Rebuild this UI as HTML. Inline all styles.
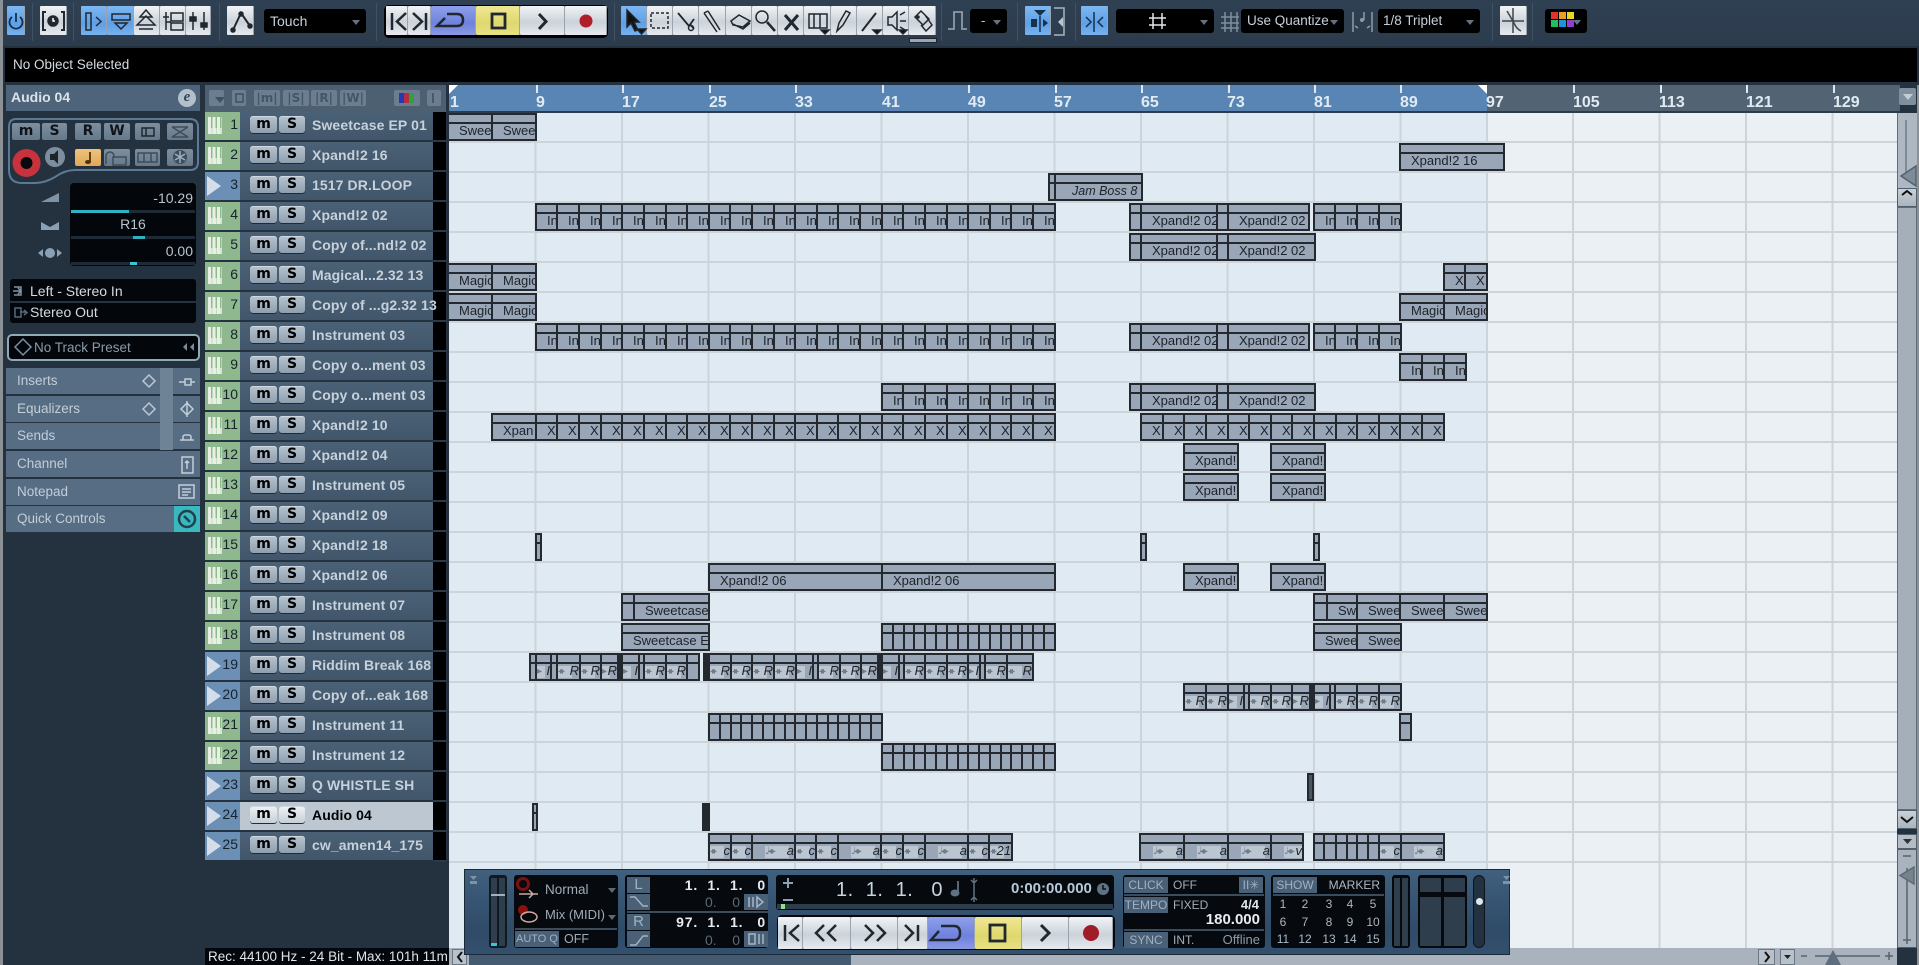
<!DOCTYPE html>
<html><head><meta charset="utf-8"><title>Cubase Project</title>
<style>
html,body{margin:0;padding:0;background:#24323f}
#p{position:relative;width:1919px;height:965px;overflow:hidden;background:#24323f;font:13px/16px "Liberation Sans",sans-serif;white-space:nowrap;color:#d0d8e0}
#p *{position:absolute}
.tb{top:6px;height:29px;background:linear-gradient(#f1f4f6,#cbd2d9 55%,#e6eaee);box-shadow:inset -1px 0 0 #9aa4ae;border-radius:1px}
.bl{background:linear-gradient(#7db8f2,#5f9fe6 60%,#78b2ee)}
.cb{top:9px;height:24px;background:#000;border-radius:3px;line-height:24px;color:#c6d0da;padding-left:6px;box-sizing:border-box}
.cb u{right:6px;top:11px;width:0;height:0;border:4px solid transparent;border-top:5px solid #64727f;border-bottom:0}
.sp{top:3px;width:1px;height:38px;background:#3f5264}
.l{left:205px;width:228px;height:28px;background:linear-gradient(#4b6176,#41566a);color:#c6d1db;font-weight:bold;font-size:14px;letter-spacing:.1px;line-height:27px}
.n{left:0;top:0;width:35px;height:28px;color:#17222c;font-weight:normal;text-align:right;letter-spacing:0;font-size:14px;line-height:24px;box-sizing:border-box;padding-right:2px}
.m{background:#8fb88f}.a{background:#6c8fb5}
.m::before{content:"";position:absolute;left:3px;top:5px;width:14px;height:17px;background:repeating-linear-gradient(90deg,#e8f0e4 0 3px,#8fb88f 3px 4.5px) 0 0/100% 11px no-repeat,repeating-linear-gradient(90deg,#e8f0e4 0 3.5px,#c6dcc4 3.5px 4.5px)}
.a::before{content:"";position:absolute;left:2px;top:4px;width:14px;height:20px;background:#d3deea;clip-path:polygon(0 0,100% 50%,0 100%)}
.B{top:4px;height:17px;background:linear-gradient(#b7c3cf,#8f9fae);border-radius:3px;box-shadow:0 1px 0 #1f2b36,inset 0 1px 0 #cfd8e0;color:#000;font:bold 14px/16px "DejaVu Sans",sans-serif;text-align:center;letter-spacing:0}
.B1{left:45px;width:27px}.B2{left:74px;width:26px}
.N{left:107px;top:0}
.sel{background:#bcc7d2;color:#000}
.sel .B{background:linear-gradient(#f0f3f5,#c6cfd7)}
.t{left:-1px;width:1900px;height:30px}
.t b{top:1px;height:24px;z-index:0;border:2px solid #23292f;background:linear-gradient(#98a6b8 7px,#23292f 7px 9px,#98a6b8 9px);font-weight:normal;color:#1d2228;line-height:32px;overflow:hidden;text-indent:10px}
.t b.D{background:#23292f}
.t b.f{border-left:0}
.A,.Q,.P{text-align:right;font-style:italic;text-indent:0!important;font-size:13px}
.A::before,.Q::before,.P::before{position:absolute;z-index:-1;left:0;top:11px;height:12px;background:#bcc6d1;color:#6f7c89;font:normal 10px/12px "DejaVu Sans",sans-serif;letter-spacing:-3px;text-align:left}
.A::before{content:"◂▸";width:14px}
.P::before{content:"▸";width:8px}
.Q::before{content:"♩◂▸";left:12px;width:24px;letter-spacing:-2px}
.rk{top:85px;width:2px;height:8px;background:#dfe8f0}
.rl{top:95px;font:bold 16px/16px "Liberation Sans",sans-serif;color:#e2ebf2}
.ib{left:6px;width:194px;height:26px;background:#566d84;color:#c3ced8;line-height:25px;text-indent:11px;font-size:13.5px}
.mb{top:123px;height:17px;background:linear-gradient(#7d8f9f,#66798a);border-radius:2px;color:#0e141a;font:bold 14px/16px "DejaVu Sans",sans-serif;text-align:center}
.lh{top:90px;height:16px;background:#6b7d8e;border-radius:2px;color:#42566a;font:bold 12px/16px "DejaVu Sans",sans-serif;text-align:center}
.bk{background:#06090d;border-radius:3px}
.tl{background:#4a6076;color:#9fb2c2;text-align:center;font-size:12px;line-height:16px}
.v{color:#e4ecf2;font-weight:bold;font-size:14px;letter-spacing:.8px;white-space:pre}
.dm{color:#5a6a78;font-size:14px;white-space:pre}
.mk{color:#aab8c4;font-size:12px;width:18px;text-align:center}
</style></head><body><div id="p">

<!-- edges -->
<div style="left:0;top:0;width:3px;height:965px;background:#8c9196"></div>
<div style="left:3px;top:0;width:1916px;height:46px;background:linear-gradient(#2f4052,#2c3c4d)"></div>
<div style="left:5px;top:48px;width:1912px;height:34px;background:#000"></div>
<div style="left:13px;top:57px;color:#d4dce3;font-size:13.5px">No Object Selected</div>

<!-- toolbar -->
<div class="sp" style="left:32px"></div><div class="sp" style="left:73px"></div><div class="sp" style="left:219px"></div><div class="sp" style="left:376px"></div><div class="sp" style="left:614px"></div><div class="sp" style="left:941px"></div><div class="sp" style="left:1017px"></div><div class="sp" style="left:1075px"></div><div class="sp" style="left:1492px"></div><div class="sp" style="left:1532px"></div>
<div class="tb bl" style="left:7px;width:18px"></div>
<div class="tb" style="left:40px;width:27px"></div>
<div class="tb bl" style="left:81px;width:26px"></div>
<div class="tb bl" style="left:107px;width:27px"></div>
<div class="tb" style="left:134px;width:26px"></div>
<div class="tb" style="left:160px;width:26px"></div>
<div class="tb" style="left:186px;width:25px"></div>
<div class="tb" style="left:227px;width:27px"></div>
<div class="cb" style="left:264px;width:102px;font-size:14px">Touch<u></u></div>
<div style="left:384px;top:5px;width:224px;height:33px;background:#000;border-radius:5px"></div>
<div class="tb" style="left:386px;width:22px"></div>
<div class="tb" style="left:408px;width:23px"></div>
<div class="tb" style="left:431px;width:45px;background:linear-gradient(#8e9fea,#6f82dc 60%,#8a9ae4)"></div>
<div class="tb" style="left:476px;width:44px;background:linear-gradient(#efe894,#dfd76e 60%,#e8e184)"></div>
<div class="tb" style="left:520px;width:45px"></div>
<div class="tb" style="left:565px;width:42px"></div>
<div class="tb bl" style="left:621px;width:26px"></div>
<div class="tb" style="left:647px;width:26px"></div><div class="tb" style="left:673px;width:26px"></div><div class="tb" style="left:699px;width:27px"></div><div class="tb" style="left:726px;width:26px"></div><div class="tb" style="left:752px;width:26px"></div><div class="tb" style="left:778px;width:26px"></div><div class="tb" style="left:804px;width:27px"></div><div class="tb" style="left:831px;width:26px"></div><div class="tb" style="left:857px;width:26px"></div><div class="tb" style="left:883px;width:26px"></div><div class="tb" style="left:909px;width:27px"></div>
<div style="left:909px;top:38px;width:28px;height:5px;background:#9aa6b4;border:1px solid #1b2631;box-sizing:border-box"></div>
<div class="cb" style="left:970px;width:37px;text-align:left;padding-left:11px">-<u></u></div>
<div class="tb bl" style="left:1025px;width:26px"></div>
<div class="tb bl" style="left:1081px;width:27px"></div>
<div class="cb" style="left:1116px;width:98px"><u></u></div>
<div class="cb" style="left:1241px;width:103px;font-size:13.5px">Use Quantize<u></u></div>
<div class="cb" style="left:1378px;width:102px;padding-left:5px;font-size:13.5px">1/8 Triplet<u></u></div>
<div class="tb" style="left:1500px;width:27px"></div>
<div class="cb" style="left:1545px;width:42px"><u></u></div>
<div style="left:1551px;top:12px;width:7px;height:7px;background:#e03030"></div><div style="left:1559px;top:12px;width:7px;height:7px;background:#e8a020"></div><div style="left:1567px;top:12px;width:7px;height:7px;background:#e8d820"></div>
<div style="left:1551px;top:20px;width:7px;height:7px;background:#20c060"></div><div style="left:1559px;top:20px;width:7px;height:7px;background:#2090e0"></div><div style="left:1567px;top:20px;width:7px;height:7px;background:#9040d0"></div>

<!-- inspector -->
<div style="left:6px;top:85px;width:194px;height:26px;background:#4e647a;color:#dbe3ea;font-weight:bold;font-size:14px;line-height:25px;text-indent:5px">Audio 04</div>
<div style="left:178px;top:89px;width:18px;height:18px;border-radius:50%;background:#b3c0cc;color:#33485a;font:italic bold 15px/17px 'Liberation Serif',serif;text-align:center">e</div>
<div class="mb" style="left:12px;width:28px">m</div><div class="mb" style="left:42px;width:25px">S</div><div class="mb" style="left:75px;width:26px">R</div><div class="mb" style="left:104px;width:26px">W</div><div class="mb" style="left:135px;width:25px"></div><div class="mb" style="left:167px;width:26px"></div>
<div class="mb" style="left:75px;top:149px;width:26px;background:linear-gradient(#eec27e,#e0a858)"></div><div class="mb" style="left:104px;top:149px;width:26px"></div><div class="mb" style="left:135px;top:149px;width:25px"></div><div class="mb" style="left:167px;top:149px;width:26px"></div>
<div style="left:70px;top:183px;width:126px;height:83px;background:#03060a;border-radius:4px"></div>
<div style="right:1726px;top:190px;color:#b8c4ce;font-size:14px">-10.29</div>
<div style="left:71px;top:210px;width:124px;height:3px;background:#1e2a36"></div><div style="left:71px;top:210px;width:58px;height:3px;background:#2fb3c4"></div>
<div style="left:70px;width:126px;top:216px;text-align:center;color:#b8c4ce;font-size:14px">R16</div>
<div style="left:71px;top:236px;width:124px;height:3px;background:#1e2a36"></div><div style="left:133px;top:236px;width:12px;height:3px;background:#2fb3c4"></div>
<div style="right:1726px;top:243px;color:#b8c4ce;font-size:14px">0.00</div>
<div style="left:71px;top:262px;width:124px;height:3px;background:#1e2a36"></div><div style="left:130px;top:262px;width:7px;height:3px;background:#3fc3d4"></div>
<div style="left:10px;top:279px;width:186px;height:44px;background:#03060a;border-radius:3px"></div>
<div style="left:10px;top:301px;width:186px;height:2px;background:#25333f"></div>
<div style="left:30px;top:283px;font-size:14px;color:#d4dce3">Left - Stereo In</div>
<div style="left:30px;top:304px;font-size:14px;color:#d4dce3">Stereo Out</div>
<div style="left:7px;top:334px;width:193px;height:27px;box-sizing:border-box;background:#03060a;border:2px solid #8fa9b5;border-radius:5px"></div>
<div style="left:34px;top:340px;color:#8a9aa8;font-size:13.5px">No Track Preset</div>
<div class="ib" style="top:368px">Inserts</div><div class="ib" style="top:396px">Equalizers</div><div class="ib" style="top:423px">Sends</div><div class="ib" style="top:451px">Channel</div><div class="ib" style="top:479px">Notepad</div><div class="ib" style="top:506px">Quick Controls</div>
<div style="left:160px;top:368px;width:13px;height:82px;background:#6f8396"></div>
<div style="left:174px;top:506px;width:26px;height:26px;background:#3ab8c0"></div>

<!-- track list -->
<div style="left:205px;top:85px;width:241px;height:27px;background:#4d6072"></div>
<div class="lh" style="left:209px;width:15px"></div><div class="lh" style="left:232px;width:14px"></div>
<div class="lh" style="left:254px;width:26px">|m|</div><div class="lh" style="left:283px;width:26px">|S|</div><div class="lh" style="left:311px;width:26px">|R|</div><div class="lh" style="left:340px;width:26px">|W|</div><div class="lh" style="left:394px;width:26px"></div><div class="lh" style="left:427px;width:14px"></div>
<div style="left:399px;top:93px;width:5px;height:10px;background:#2838b0"></div><div style="left:404px;top:93px;width:5px;height:10px;background:#b03040"></div><div style="left:409px;top:93px;width:5px;height:10px;background:#30a040"></div>
<div style="left:433px;top:112px;width:13px;height:750px;background:repeating-linear-gradient(#000 0 28px,#2a3a49 28px 30px)"></div>

<div class="l" style="top:112px"><div class="n m">1</div><div class="B B1">m</div><div class="B B2">S</div><div class="N">Sweetcase EP 01</div></div>
<div class="l" style="top:142px"><div class="n m">2</div><div class="B B1">m</div><div class="B B2">S</div><div class="N">Xpand!2 16</div></div>
<div class="l" style="top:172px"><div class="n a">3</div><div class="B B1">m</div><div class="B B2">S</div><div class="N">1517 DR.LOOP</div></div>
<div class="l" style="top:202px"><div class="n m">4</div><div class="B B1">m</div><div class="B B2">S</div><div class="N">Xpand!2 02</div></div>
<div class="l" style="top:232px"><div class="n m">5</div><div class="B B1">m</div><div class="B B2">S</div><div class="N">Copy of...nd!2 02</div></div>
<div class="l" style="top:262px"><div class="n m">6</div><div class="B B1">m</div><div class="B B2">S</div><div class="N">Magical...2.32 13</div></div>
<div class="l" style="top:292px"><div class="n m">7</div><div class="B B1">m</div><div class="B B2">S</div><div class="N">Copy of ...g2.32 13</div></div>
<div class="l" style="top:322px"><div class="n m">8</div><div class="B B1">m</div><div class="B B2">S</div><div class="N">Instrument 03</div></div>
<div class="l" style="top:352px"><div class="n m">9</div><div class="B B1">m</div><div class="B B2">S</div><div class="N">Copy o...ment 03</div></div>
<div class="l" style="top:382px"><div class="n m">10</div><div class="B B1">m</div><div class="B B2">S</div><div class="N">Copy o...ment 03</div></div>
<div class="l" style="top:412px"><div class="n m">11</div><div class="B B1">m</div><div class="B B2">S</div><div class="N">Xpand!2 10</div></div>
<div class="l" style="top:442px"><div class="n m">12</div><div class="B B1">m</div><div class="B B2">S</div><div class="N">Xpand!2 04</div></div>
<div class="l" style="top:472px"><div class="n m">13</div><div class="B B1">m</div><div class="B B2">S</div><div class="N">Instrument 05</div></div>
<div class="l" style="top:502px"><div class="n m">14</div><div class="B B1">m</div><div class="B B2">S</div><div class="N">Xpand!2 09</div></div>
<div class="l" style="top:532px"><div class="n m">15</div><div class="B B1">m</div><div class="B B2">S</div><div class="N">Xpand!2 18</div></div>
<div class="l" style="top:562px"><div class="n m">16</div><div class="B B1">m</div><div class="B B2">S</div><div class="N">Xpand!2 06</div></div>
<div class="l" style="top:592px"><div class="n m">17</div><div class="B B1">m</div><div class="B B2">S</div><div class="N">Instrument 07</div></div>
<div class="l" style="top:622px"><div class="n m">18</div><div class="B B1">m</div><div class="B B2">S</div><div class="N">Instrument 08</div></div>
<div class="l" style="top:652px"><div class="n a">19</div><div class="B B1">m</div><div class="B B2">S</div><div class="N">Riddim Break 168</div></div>
<div class="l" style="top:682px"><div class="n a">20</div><div class="B B1">m</div><div class="B B2">S</div><div class="N">Copy of...eak 168</div></div>
<div class="l" style="top:712px"><div class="n m">21</div><div class="B B1">m</div><div class="B B2">S</div><div class="N">Instrument 11</div></div>
<div class="l" style="top:742px"><div class="n m">22</div><div class="B B1">m</div><div class="B B2">S</div><div class="N">Instrument 12</div></div>
<div class="l" style="top:772px"><div class="n a">23</div><div class="B B1">m</div><div class="B B2">S</div><div class="N">Q WHISTLE SH</div></div>
<div class="l sel" style="top:802px"><div class="n a">24</div><div class="B B1">m</div><div class="B B2">S</div><div class="N">Audio 04</div></div>
<div class="l" style="top:832px"><div class="n a">25</div><div class="B B1">m</div><div class="B B2">S</div><div class="N">cw_amen14_175</div></div>

<!-- status -->
<div style="left:205px;top:948px;width:244px;height:17px;background:#03060a;color:#dfe5ea;font-size:13.5px;line-height:18px;text-indent:3px;overflow:hidden">Rec: 44100 Hz - 24 Bit - Max: 101h 11m</div>

<!-- ruler -->
<div style="left:449px;top:85px;width:1038px;height:27px;background:#5985b5"></div>
<div style="left:1487px;top:85px;width:413px;height:27px;background:#526474"></div>
<div style="left:449px;top:111px;width:1451px;height:2px;background:#2c3c4c"></div>
<div class="rk" style="left:536px"></div><div class="rk" style="left:622px"></div><div class="rk" style="left:709px"></div><div class="rk" style="left:795px"></div><div class="rk" style="left:882px"></div><div class="rk" style="left:968px"></div><div class="rk" style="left:1055px"></div><div class="rk" style="left:1141px"></div><div class="rk" style="left:1228px"></div><div class="rk" style="left:1314px"></div><div class="rk" style="left:1400px"></div><div class="rk" style="left:1573px"></div><div class="rk" style="left:1660px"></div><div class="rk" style="left:1746px"></div><div class="rk" style="left:1833px"></div>
<div class="rl" style="left:450px">1</div><div class="rl" style="left:536px">9</div><div class="rl" style="left:622px">17</div><div class="rl" style="left:709px">25</div><div class="rl" style="left:795px">33</div><div class="rl" style="left:882px">41</div><div class="rl" style="left:968px">49</div><div class="rl" style="left:1054px">57</div><div class="rl" style="left:1141px">65</div><div class="rl" style="left:1227px">73</div><div class="rl" style="left:1314px">81</div><div class="rl" style="left:1400px">89</div><div class="rl" style="left:1486px">97</div><div class="rl" style="left:1573px">105</div><div class="rl" style="left:1659px">113</div><div class="rl" style="left:1746px">121</div><div class="rl" style="left:1833px">129</div>
<div style="left:1899px;top:88px;width:17px;height:17px;background:#7f8f9e;border-radius:2px"></div>

<!-- grid -->
<div style="left:449px;top:113px;width:1038px;height:835px;background:#dfeaf3"></div>
<div style="left:1487px;top:113px;width:410px;height:835px;background:#ebf0f4"></div>
<div style="left:450.3px;top:113px;width:1447px;height:835px;background:repeating-linear-gradient(90deg,transparent 0 84.48px,#cdd3da 84.48px 86.48px)"></div>
<div style="left:449px;top:113px;width:1448px;height:750px;background:repeating-linear-gradient(transparent 0 28px,#cdd3da 28px 30px)"></div>

<div class="t" style="top:112px"><b class="f" style="left:450px;width:42px">Sweetcase</b><b style="left:492px;width:42px">Sweetcase</b></div>
<div class="t" style="top:142px"><b style="left:1400px;width:102px">Xpand!2 16</b></div>
<div class="t" style="top:172px"><b style="left:1049px;width:4px"></b><b style="left:1055px;width:85px;font-style:italic;text-indent:16px;font-size:12.5px">Jam Boss 8</b></div>
<div class="t" style="top:202px"><b style="left:536px;width:19px">In</b><b style="left:557px;width:20px">In</b><b style="left:579px;width:20px">In</b><b style="left:601px;width:19px">In</b><b style="left:622px;width:20px">In</b><b style="left:644px;width:20px">In</b><b style="left:666px;width:19px">In</b><b style="left:687px;width:20px">In</b><b style="left:709px;width:19px">In</b><b style="left:730px;width:20px">In</b><b style="left:752px;width:20px">In</b><b style="left:774px;width:19px">In</b><b style="left:795px;width:20px">In</b><b style="left:817px;width:19px">In</b><b style="left:838px;width:20px">In</b><b style="left:860px;width:20px">In</b><b style="left:882px;width:19px">In</b><b style="left:903px;width:20px">In</b><b style="left:925px;width:20px">In</b><b style="left:947px;width:19px">In</b><b style="left:968px;width:20px">In</b><b style="left:990px;width:19px">In</b><b style="left:1011px;width:20px">In</b><b style="left:1033px;width:20px">In</b><b style="left:1130px;width:9px"></b><b style="left:1141px;width:74px">Xpand!2 02</b><b style="left:1217px;width:9px"></b><b style="left:1228px;width:79px">Xpand!2 02</b><b style="left:1314px;width:19px">In</b><b style="left:1335px;width:20px">In</b><b style="left:1357px;width:20px">In</b><b style="left:1379px;width:20px">In</b></div>
<div class="t" style="top:232px"><b style="left:1130px;width:9px"></b><b style="left:1141px;width:74px">Xpand!2 02</b><b style="left:1217px;width:9px"></b><b style="left:1228px;width:85px">Xpand!2 02</b></div>
<div class="t" style="top:262px"><b class="f" style="left:450px;width:42px">Magic</b><b style="left:492px;width:42px">Magic</b><b style="left:1444px;width:19px">X</b><b style="left:1465px;width:20px">X</b></div>
<div class="t" style="top:292px"><b class="f" style="left:450px;width:42px">Magic</b><b style="left:492px;width:42px">Magic</b><b style="left:1400px;width:42px">Magic</b><b style="left:1444px;width:41px">Magic</b></div>
<div class="t" style="top:322px"><b style="left:536px;width:19px">In</b><b style="left:557px;width:20px">In</b><b style="left:579px;width:20px">In</b><b style="left:601px;width:19px">In</b><b style="left:622px;width:20px">In</b><b style="left:644px;width:20px">In</b><b style="left:666px;width:19px">In</b><b style="left:687px;width:20px">In</b><b style="left:709px;width:19px">In</b><b style="left:730px;width:20px">In</b><b style="left:752px;width:20px">In</b><b style="left:774px;width:19px">In</b><b style="left:795px;width:20px">In</b><b style="left:817px;width:19px">In</b><b style="left:838px;width:20px">In</b><b style="left:860px;width:20px">In</b><b style="left:882px;width:19px">In</b><b style="left:903px;width:20px">In</b><b style="left:925px;width:20px">In</b><b style="left:947px;width:19px">In</b><b style="left:968px;width:20px">In</b><b style="left:990px;width:19px">In</b><b style="left:1011px;width:20px">In</b><b style="left:1033px;width:20px">In</b><b style="left:1130px;width:9px"></b><b style="left:1141px;width:74px">Xpand!2 02</b><b style="left:1217px;width:9px"></b><b style="left:1228px;width:79px">Xpand!2 02</b><b style="left:1314px;width:19px">In</b><b style="left:1335px;width:20px">In</b><b style="left:1357px;width:20px">In</b><b style="left:1379px;width:20px">In</b></div>
<div class="t" style="top:352px"><b style="left:1400px;width:20px">In</b><b style="left:1422px;width:20px">In</b><b style="left:1444px;width:20px">In</b></div>
<div class="t" style="top:382px"><b style="left:882px;width:19px">In</b><b style="left:903px;width:20px">In</b><b style="left:925px;width:20px">In</b><b style="left:947px;width:19px">In</b><b style="left:968px;width:20px">In</b><b style="left:990px;width:19px">In</b><b style="left:1011px;width:20px">In</b><b style="left:1033px;width:20px">In</b><b style="left:1130px;width:9px"></b><b style="left:1141px;width:74px">Xpand!2 02</b><b style="left:1217px;width:9px"></b><b style="left:1228px;width:85px">Xpand!2 02</b></div>
<div class="t" style="top:412px"><b style="left:492px;width:42px">Xpan</b><b style="left:536px;width:19px">X</b><b style="left:557px;width:20px">X</b><b style="left:579px;width:20px">X</b><b style="left:601px;width:19px">X</b><b style="left:622px;width:20px">X</b><b style="left:644px;width:20px">X</b><b style="left:666px;width:19px">X</b><b style="left:687px;width:20px">X</b><b style="left:709px;width:19px">X</b><b style="left:730px;width:20px">X</b><b style="left:752px;width:20px">X</b><b style="left:774px;width:19px">X</b><b style="left:795px;width:20px">X</b><b style="left:817px;width:19px">X</b><b style="left:838px;width:20px">X</b><b style="left:860px;width:20px">X</b><b style="left:882px;width:19px">X</b><b style="left:903px;width:20px">X</b><b style="left:925px;width:20px">X</b><b style="left:947px;width:19px">X</b><b style="left:968px;width:20px">X</b><b style="left:990px;width:19px">X</b><b style="left:1011px;width:20px">X</b><b style="left:1033px;width:20px">X</b><b style="left:1141px;width:20px">X</b><b style="left:1163px;width:19px">X</b><b style="left:1184px;width:20px">X</b><b style="left:1206px;width:20px">X</b><b style="left:1228px;width:19px">X</b><b style="left:1249px;width:20px">X</b><b style="left:1271px;width:19px">X</b><b style="left:1292px;width:20px">X</b><b style="left:1314px;width:20px">X</b><b style="left:1336px;width:19px">X</b><b style="left:1357px;width:20px">X</b><b style="left:1379px;width:19px">X</b><b style="left:1400px;width:20px">X</b><b style="left:1422px;width:20px">X</b></div>
<div class="t" style="top:442px"><b style="left:1184px;width:52px">Xpand!2</b><b style="left:1271px;width:52px">Xpand!2</b></div>
<div class="t" style="top:472px"><b style="left:1184px;width:52px">Xpand!2</b><b style="left:1271px;width:52px">Xpand!2</b></div>
<div class="t" style="top:532px"><b style="left:536px;width:3px"></b><b style="left:1141px;width:3px"></b><b style="left:1314px;width:3px"></b></div>
<div class="t" style="top:562px"><b style="left:709px;width:171px">Xpand!2 06</b><b style="left:882px;width:171px">Xpand!2 06</b><b style="left:1184px;width:52px">Xpand!2</b><b style="left:1271px;width:52px">Xpand!2</b></div>
<div class="t" style="top:592px"><b style="left:622px;width:10px"></b><b style="left:634px;width:73px">Sweetcase EP</b><b style="left:1314px;width:11px"></b><b style="left:1327px;width:28px">Sweetcase</b><b style="left:1357px;width:41px">Sweetcase</b><b style="left:1400px;width:42px">Sweetcase</b><b style="left:1444px;width:41px">Sweetcase</b></div>
<div class="t" style="top:622px"><b style="left:622px;width:85px">Sweetcase EP</b><b style="left:882px;width:9px"></b><b style="left:893px;width:9px"></b><b style="left:904px;width:8px"></b><b style="left:914px;width:9px"></b><b style="left:925px;width:9px"></b><b style="left:936px;width:9px"></b><b style="left:947px;width:9px"></b><b style="left:958px;width:8px"></b><b style="left:968px;width:9px"></b><b style="left:979px;width:9px"></b><b style="left:990px;width:9px"></b><b style="left:1001px;width:8px"></b><b style="left:1011px;width:9px"></b><b style="left:1022px;width:9px"></b><b style="left:1033px;width:9px"></b><b style="left:1044px;width:9px"></b><b style="left:1314px;width:41px">Sweetcase</b><b style="left:1357px;width:42px">Sweetcase</b></div>
<div class="t" style="top:652px"><b style="left:530px;width:4px"></b><b class="P" style="left:536px;width:13px">I</b><b style="left:551px;width:4px"></b><b class="A" style="left:557px;width:21px">R</b><b class="A" style="left:580px;width:19px">R</b><b class="P" style="left:601px;width:15px">R</b><b class="D" style="left:618px;width:2px"></b><b class="P" style="left:622px;width:15px">I</b><b style="left:639px;width:3px"></b><b class="A" style="left:644px;width:20px">R</b><b class="A" style="left:666px;width:19px">R</b><b style="left:687px;width:10px"></b><b class="D" style="left:704px;width:3px"></b><b class="A" style="left:709px;width:20px">R</b><b class="A" style="left:731px;width:19px">R</b><b class="A" style="left:752px;width:20px">R</b><b class="A" style="left:774px;width:20px">R</b><b class="P" style="left:796px;width:15px">I</b><b style="left:813px;width:3px"></b><b class="A" style="left:818px;width:20px">R</b><b class="A" style="left:840px;width:19px">R</b><b class="P" style="left:861px;width:15px">R</b><b class="D" style="left:878px;width:2px"></b><b class="P" style="left:882px;width:15px">I</b><b style="left:899px;width:3px"></b><b class="A" style="left:904px;width:19px">R</b><b class="A" style="left:925px;width:20px">R</b><b class="A" style="left:947px;width:19px">R</b><b class="P" style="left:968px;width:10px">I</b><b style="left:980px;width:3px"></b><b class="A" style="left:985px;width:20px">R</b><b class="A" style="left:1007px;width:24px">R</b></div>
<div class="t" style="top:682px"><b class="A" style="left:1184px;width:20px">R</b><b class="A" style="left:1206px;width:20px">R</b><b class="P" style="left:1228px;width:14px">I</b><b style="left:1244px;width:3px"></b><b class="A" style="left:1249px;width:20px">R</b><b class="A" style="left:1271px;width:19px">R</b><b class="P" style="left:1292px;width:16px">R</b><b class="D" style="left:1310px;width:2px"></b><b class="P" style="left:1314px;width:14px">I</b><b style="left:1330px;width:3px"></b><b class="A" style="left:1335px;width:20px">R</b><b class="A" style="left:1357px;width:20px">R</b><b class="A" style="left:1379px;width:20px">R</b></div>
<div class="t" style="top:712px"><b style="left:709px;width:9px"></b><b style="left:720px;width:9px"></b><b style="left:731px;width:8px"></b><b style="left:741px;width:9px"></b><b style="left:752px;width:9px"></b><b style="left:763px;width:9px"></b><b style="left:774px;width:9px"></b><b style="left:785px;width:8px"></b><b style="left:795px;width:9px"></b><b style="left:806px;width:9px"></b><b style="left:817px;width:9px"></b><b style="left:828px;width:8px"></b><b style="left:838px;width:9px"></b><b style="left:849px;width:9px"></b><b style="left:860px;width:9px"></b><b style="left:871px;width:9px"></b><b style="left:1400px;width:9px"></b></div>
<div class="t" style="top:742px"><b style="left:882px;width:9px"></b><b style="left:893px;width:9px"></b><b style="left:904px;width:8px"></b><b style="left:914px;width:9px"></b><b style="left:925px;width:9px"></b><b style="left:936px;width:9px"></b><b style="left:947px;width:9px"></b><b style="left:958px;width:8px"></b><b style="left:968px;width:9px"></b><b style="left:979px;width:9px"></b><b style="left:990px;width:9px"></b><b style="left:1001px;width:8px"></b><b style="left:1011px;width:9px"></b><b style="left:1022px;width:9px"></b><b style="left:1033px;width:9px"></b><b style="left:1044px;width:9px"></b></div>
<div class="t" style="top:772px"><b style="left:1308px;width:3px;background:#4a5560"></b></div>
<div class="t" style="top:802px"><b style="left:533px;width:2px"></b><b class="D" style="left:703px;width:4px"></b></div>
<div class="t" style="top:832px"><b class="A" style="left:709px;width:20px">c</b><b class="A" style="left:731px;width:19px">c</b><b class="Q" style="left:752px;width:41px">a</b><b class="A" style="left:795px;width:19px">c</b><b class="A" style="left:816px;width:20px">c</b><b class="Q" style="left:838px;width:41px">a</b><b class="A" style="left:881px;width:20px">c</b><b class="A" style="left:903px;width:20px">c</b><b class="Q" style="left:925px;width:41px">a</b><b class="A" style="left:968px;width:19px">c</b><b class="A" style="left:989px;width:21px">21</b><b class="Q" style="left:1140px;width:42px">a</b><b class="Q" style="left:1184px;width:42px">a</b><b class="Q" style="left:1228px;width:41px">a</b><b class="Q" style="left:1271px;width:30px">v</b><b style="left:1314px;width:8px"></b><b style="left:1324px;width:10px"></b><b style="left:1336px;width:9px"></b><b style="left:1347px;width:8px"></b><b style="left:1357px;width:9px"></b><b style="left:1368px;width:9px"></b><b class="A" style="left:1379px;width:20px">c</b><b class="Q" style="left:1401px;width:41px">a</b></div>

<!-- right scroll -->
<div style="left:1897px;top:113px;width:20px;height:75px;background:#aeb8c2;border-left:1px solid #5d6d7c;box-sizing:border-box"></div>
<div style="left:1897px;top:188px;width:20px;height:19px;background:linear-gradient(#c8d0d8,#aab4be);border:1px solid #4f5f6e;box-sizing:border-box"></div>
<div style="left:1897px;top:207px;width:20px;height:603px;background:#a5afba;border:1px solid #5d6d7c;box-sizing:border-box"></div>
<div style="left:1897px;top:810px;width:20px;height:19px;background:linear-gradient(#c8d0d8,#aab4be);border:1px solid #4f5f6e;box-sizing:border-box"></div>
<div style="left:1897px;top:834px;width:20px;height:15px;background:#b4bdc6;border:1px solid #4f5f6e;box-sizing:border-box"></div>
<div style="left:1897px;top:849px;width:20px;height:99px;background:#a9b3bd;border:1px solid #4f5f6e;box-sizing:border-box"></div>
<div style="left:1897px;top:948px;width:20px;height:17px;background:#24323f"></div>
<div style="left:1917px;top:85px;width:2px;height:880px;background:#8c9196"></div>

<!-- bottom scroll -->
<div style="left:449px;top:948px;width:1448px;height:17px;background:#aab2bd"></div>
<div style="left:452px;top:949px;width:15px;height:16px;background:#b8c0ca;border:1px solid #6a7886;box-sizing:border-box"></div>
<div style="left:469px;top:949px;width:382px;height:16px;background:#445a70"></div>
<div style="left:1758px;top:949px;width:17px;height:16px;background:#b8c0ca;border:1px solid #6a7886;box-sizing:border-box"></div>
<div style="left:1780px;top:949px;width:15px;height:16px;background:#b8c0ca;border:1px solid #6a7886;box-sizing:border-box"></div>

<!-- transport -->
<div style="left:464px;top:869px;width:1046px;height:86px;background:linear-gradient(#40607e,#2f4b68 70%,#33506e);border:1px solid #1b2935;box-sizing:border-box"></div>
<div class="bk" style="left:489px;top:875px;width:18px;height:73px;background:#101820"></div>
<div style="left:491px;top:878px;width:6px;height:68px;background:#2f3e4c"></div><div style="left:499px;top:878px;width:6px;height:68px;background:#2f3e4c"></div>
<div style="left:491px;top:894px;width:14px;height:2px;background:#9fb0be"></div>
<div style="left:491px;top:943px;width:6px;height:3px;background:#30c8e0"></div>
<div class="bk" style="left:514px;top:875px;width:104px;height:73px"></div>
<div style="left:545px;top:882px;color:#9fadb9;font-size:13.5px">Normal</div>
<div style="left:545px;top:907px;color:#9fadb9;font-size:13px">Mix (MIDI)</div>
<div style="left:515px;top:928px;width:102px;height:2px;background:#3b4c5c"></div>
<div class="tl" style="left:515px;top:931px;width:44px;height:16px;font-size:11px">AUTO Q</div>
<div style="left:564px;top:931px;color:#9fadb9;font-size:12.5px">OFF</div>
<div class="bk" style="left:625px;top:875px;width:143px;height:73px"></div>
<div class="tl" style="left:627px;top:877px;width:23px;height:16px;font-size:15px">L</div>
<div class="tl" style="left:627px;top:894px;width:23px;height:16px"></div>
<div style="left:627px;top:911px;width:141px;height:2px;background:#3b4c5c"></div>
<div class="tl" style="left:627px;top:914px;width:23px;height:16px;font-size:15px">R</div>
<div class="tl" style="left:627px;top:931px;width:23px;height:16px"></div>
<div class="tl" style="left:744px;top:894px;width:24px;height:16px"></div><div class="tl" style="left:744px;top:931px;width:24px;height:16px"></div>
<div class="v" style="right:1153px;top:877px">1.  1.  1.   0</div>
<div class="dm" style="right:1179px;top:894px">0.    0</div>
<div class="v" style="right:1153px;top:914px">97.  1.  1.   0</div>
<div class="dm" style="right:1179px;top:932px">0.    0</div>
<div class="bk" style="left:776px;top:875px;width:338px;height:35px"></div>
<div style="left:777px;top:904px;width:336px;height:5px;background:#2e3d4a"></div>
<div style="left:781px;top:904px;width:4px;height:5px;background:#8fe08f"></div>
<div style="left:836px;top:880px;font-size:20px;line-height:20px;color:#c8d4de;white-space:pre;letter-spacing:.5px">1.  1.  1.   0</div>
<div style="left:1011px;top:881px;font-size:15px;font-weight:bold;color:#b7c9d8">0:00:00.000</div>
<div style="left:777px;top:915px;width:338px;height:35px;background:#05080c;border-radius:5px"></div>
<div class="tb" style="left:778px;top:917px;width:25px;height:32px"></div><div class="tb" style="left:803px;top:917px;width:48px;height:32px"></div><div class="tb" style="left:851px;top:917px;width:47px;height:32px"></div><div class="tb" style="left:898px;top:917px;width:30px;height:32px"></div>
<div class="tb" style="left:928px;top:917px;width:47px;height:32px;background:linear-gradient(#8e9fea,#6f82dc 60%,#8a9ae4)"></div>
<div class="tb" style="left:975px;top:917px;width:47px;height:32px;background:linear-gradient(#efe894,#dfd76e 60%,#e8e184)"></div>
<div class="tb" style="left:1022px;top:917px;width:47px;height:32px"></div><div class="tb" style="left:1069px;top:917px;width:44px;height:32px"></div>

<div class="bk" style="left:1123px;top:875px;width:142px;height:73px"></div>
<div class="tl" style="left:1124px;top:877px;width:44px;height:16px;font-size:12px">CLICK</div>
<div style="left:1173px;top:877px;color:#9fadb9;font-size:12px">OFF</div>
<div class="tl" style="left:1239px;top:877px;width:24px;height:16px;font-size:12px">II✳</div>
<div style="left:1124px;top:894px;width:140px;height:2px;background:#3b4c5c"></div>
<div class="tl" style="left:1124px;top:897px;width:44px;height:16px;font-size:12px">TEMPO</div>
<div style="left:1173px;top:897px;color:#9fadb9;font-size:12px">FIXED</div>
<div style="right:660px;top:897px;color:#dde6ee;font-weight:bold;font-size:13px">4/4</div>
<div style="right:659px;top:912px;color:#e8eef3;font-weight:bold;font-size:15px">180.000</div>
<div style="left:1124px;top:929px;width:140px;height:2px;background:#3b4c5c"></div>
<div class="tl" style="left:1124px;top:932px;width:44px;height:16px;font-size:12px">SYNC</div>
<div style="left:1173px;top:932px;color:#9fadb9;font-size:12px">INT.</div>
<div style="right:659px;top:932px;color:#8d9ca9;font-size:13px">Offline</div>
<div class="bk" style="left:1271px;top:875px;width:114px;height:73px"></div>
<div class="tl" style="left:1273px;top:877px;width:44px;height:16px;font-size:12px">SHOW</div>
<div style="right:539px;top:877px;color:#aab8c4;font-size:12px">MARKER</div>
<div style="left:1273px;top:894px;width:111px;height:2px;background:#3b4c5c"></div>
<div class="mk" style="left:1274px;top:896px">1</div><div class="mk" style="left:1296px;top:896px">2</div><div class="mk" style="left:1320px;top:896px">3</div><div class="mk" style="left:1341px;top:896px">4</div><div class="mk" style="left:1364px;top:896px">5</div>
<div class="mk" style="left:1274px;top:914px">6</div><div class="mk" style="left:1296px;top:914px">7</div><div class="mk" style="left:1320px;top:914px">8</div><div class="mk" style="left:1341px;top:914px">9</div><div class="mk" style="left:1364px;top:914px">10</div>
<div class="mk" style="left:1274px;top:931px">11</div><div class="mk" style="left:1296px;top:931px">12</div><div class="mk" style="left:1320px;top:931px">13</div><div class="mk" style="left:1341px;top:931px">14</div><div class="mk" style="left:1364px;top:931px">15</div>
<div class="bk" style="left:1392px;top:875px;width:18px;height:73px"></div>
<div style="left:1394px;top:878px;width:6px;height:68px;background:#2f3e4c"></div><div style="left:1402px;top:878px;width:6px;height:68px;background:#2f3e4c"></div>
<div class="bk" style="left:1418px;top:875px;width:49px;height:73px"></div>
<div style="left:1420px;top:878px;width:21px;height:14px;background:#2f3e4c"></div><div style="left:1444px;top:878px;width:21px;height:14px;background:#2f3e4c"></div>
<div style="left:1420px;top:897px;width:21px;height:49px;background:#2f3e4c"></div><div style="left:1444px;top:897px;width:21px;height:49px;background:#2f3e4c"></div>
<div style="left:1473px;top:875px;width:12px;height:73px;background:#233240;border:1px solid #0d151c;border-radius:6px;box-sizing:border-box"></div>
<div style="left:1476px;top:898px;width:7px;height:7px;background:#dfe8ef;border-radius:50%"></div>

<!-- icon overlay -->
<svg width="1919" height="965" viewBox="0 0 1919 965" style="left:0;top:0;pointer-events:none" fill="none" stroke="#20272e" stroke-width="1.5">
<path d="M12 17a6.5 6.5 0 1 0 8 0M16 13v9" stroke="#14314f" stroke-width="1.8"/>
<path d="M46 12h-3v18h3M61 12h3v18h-3" stroke-width="2"/><circle cx="53" cy="21" r="5" fill="#20272e"/><path d="M53 18v3h2" stroke="#fff"/>
<rect x="86" y="13" width="5" height="17"/><path d="M96 17l5 4.500-5 4.500"/>
<path d="M112 14h18v6h-18zM115 23h12l-6 6z"/>
<path d="M146 10l-6 7h12zM146 16l-9 9h18zM139 29h14"/>
<path d="M166 12v18M163 17h6M171 13h12v8h-12zM171 23h12v7h-12zM166 22h5"/>
<path d="M193 12v18M204 12v18"/><rect x="190" y="17" width="6" height="4" fill="#20272e"/><rect x="201" y="23" width="6" height="4" fill="#20272e"/>
<path d="M233 30l8-17 9 13" stroke-width="2"/><circle cx="233" cy="30" r="2" fill="#20272e"/><circle cx="241" cy="14" r="2" fill="#20272e"/><circle cx="250" cy="26" r="2" fill="#20272e"/>
<path d="M392 13v17M406 13l-9 8.500 9 8.500M413 13l9 8.500-9 8.500M426 13v17" stroke-width="2.500"/>
<path d="M447 14h10q6 0 6 6t-6 6h-20l8-8" stroke-width="2.500"/>
<rect x="492" y="14" width="13" height="14" stroke-width="2.800"/>
<path d="M539 14l7 7.500-7 7.500" stroke-width="3"/>
<circle cx="586" cy="21" r="6.500" fill="#b01e2a" stroke="none"/>
<path d="M627 10v17l4-4 4 8 3-1-4-8h5z" fill="#111"/><path d="M637 29h9l-4.500 5z" fill="#111"/>
<rect x="651" y="13" width="17" height="15" stroke-dasharray="3 2"/>
<path d="M678 13l11 13M690 24l4 5M694 19l-5 7" stroke-width="1.800"/><circle cx="691" cy="28" r="2.500"/>
<path d="M704 13l13 19M708 11l12 19M704 13l4-2"/>
<path d="M731 21l8-6 11 6-7 6-10-2zM733 24l10 5 7-6"/>
<circle cx="762" cy="17" r="6"/><path d="M767 22l8 9" stroke-width="2.500"/>
<path d="M785 15l13 15M798 15l-13 15" stroke-width="3"/>
<path d="M809 14h18v14h-18zM814 14v14M820 14v14"/><path d="M821 30h8l-4 4z" fill="#111"/>
<path d="M837 31l2-8 7-12 4 2-7 12z"/>
<path d="M862 31l14-18" stroke-width="2"/><path d="M873 30h8l-4 4z" fill="#111"/>
<path d="M888 17h4l5-5v18l-5-5h-4zM900 15l5-3M900 21h6M900 27l5 3"/><path d="M899 30h8l-4 4z" fill="#111"/>
<path d="M915 17l6-6 8 8-6 6zM925 15l7 10-6 6-5-6"/><circle cx="918" cy="17" r="1" fill="#111"/>
<path d="M948 29h6V12h8v17h5" stroke="#8d9ba8" stroke-width="1.800"/>
<path d="M1034 10h12l-6 6z" fill="#14314f" stroke="none"/><path d="M1040 16v16" stroke="#14314f"/><rect x="1031" y="19" width="6" height="8" fill="#14314f" stroke="none"/><path d="M1043 19l5 4-5 4z" fill="#14314f" stroke="none"/>
<path d="M1054 8h10v27h-10" stroke="#a8b6c2"/><path d="M1063 17l-5 5 5 5z" fill="#b8c6d2" stroke="none"/>
<path d="M1094 12v20M1086 17l5 5-5 5M1103 17l-5 5 5 5" stroke="#14314f"/>
<path d="M1153 13v16M1162 13v16M1149 18h17M1149 25h17" stroke="#dfe7ee"/>
<path d="M1225 12v20M1231 12v20M1237 12v20M1221 17h18M1221 23h18M1221 28h18" stroke="#7e8f9e"/>
<path d="M1353 12v20M1372 12v20M1364 12v8M1358 28l-3-2M1367 28l3-2" stroke="#8d9ba8"/><circle cx="1362" cy="20" r="2" fill="#8d9ba8" stroke="none"/>
<path d="M1507 11q6 10 8 14t6 6M1502 21h22M1513 8v25" stroke="#3e464e"/>
<path d="M41 202l18-9v9z" fill="#7f93a6" stroke="none"/>
<path d="M41 222l9 5 9-5v8h-18z" fill="#8aa0b4" stroke="none"/>
<circle cx="50" cy="253" r="5" fill="#8aa0b4" stroke="none"/><path d="M43 249l-5 4 5 4zM57 249l5 4-5 4z" fill="#8aa0b4" stroke="none"/>
<path d="M16 119H190Q198 119 198 127V162Q198 170 190 170H75Q65 170 55 177Q45 183 35 183H22Q9 183 9 170V127Q9 119 16 119Z" stroke="#5b7a96" stroke-width="2"/>
<path d="M142 128h12v8h-12zM146 128v8"/><path d="M172 127h16M172 137h16M172 127l16 10M188 127l-16 10" stroke="#3f4d5a"/>
<circle cx="26.500" cy="163" r="14" fill="#c8323c" stroke="none"/><circle cx="26.500" cy="163" r="6" fill="#07090c" stroke="none"/>
<circle cx="55" cy="157" r="10" fill="#7d8f9f" stroke="none"/><path d="M50 154h4l4-4v14l-4-4h-4z" fill="#1b232b" stroke="none"/>
<path d="M90 152v10" stroke="#4c3408" stroke-width="1.800"/><ellipse cx="88" cy="162" rx="3" ry="2" fill="#4c3408" stroke="none"/>
<path d="M106 164v-8a4 4 0 0 1 8 0v1M113 157h13v8h-13z" stroke="#3c4d5c"/>
<path d="M138 153h19v9h-19zM144 153v9M151 153v9" stroke="#3c4d5c"/>
<circle cx="180" cy="157" r="7" fill="#3c4d5c" stroke="none"/><path d="M180 151v12M175 154l10 6M185 154l-10 6" stroke="#9eb0be"/>
<path d="M14 287h7v8h-7M20 291h-7M18 288l3 3-3 3" stroke="#7f93a6"/><path d="M15 308h6v9h-6zM20 312h6M24 310l3 2.500-3 2.500" stroke="#56697b"/>
<path d="M23 339l8 8-8 8-8-8z" stroke="#7d8f9f"/><path d="M187 343l-4 4 4 4zM194 343l-4 4 4 4z" fill="#7a8a98" stroke="none"/>
<path d="M149 375l6 6-6 6-6-6z" stroke="#bcc8d3"/><path d="M149 403l6 6-6 6-6-6z" stroke="#bcc8d3"/>
<path d="M179 382h6v-3h6v6h-6v-3M191 382h4" stroke="#c3ced8"/><path d="M187 403l6 6-6 6-6-6zM187 401v16" stroke="#c3ced8"/>
<path d="M180 440h14M183 440v-3a2 2 0 0 1 2-2h4a2 2 0 0 1 2 2v3" stroke="#c3ced8"/>
<rect x="182" y="457" width="11" height="16" stroke="#c3ced8"/><path d="M187 461v8M185 463l2-2 2 2" stroke="#c3ced8"/>
<rect x="179" y="485" width="15" height="13" stroke="#c3ced8"/><path d="M182 489h9M182 492h9M182 495h6" stroke="#c3ced8"/>
<circle cx="187" cy="519" r="8" stroke="#23404c" stroke-width="2.500"/><path d="M184 516l6 6" stroke="#23404c" stroke-width="2.500"/>
<path d="M215 97h10l-5 6z" fill="#3e5162" stroke="none"/><rect x="236" y="94" width="7" height="8" stroke="#3e5162"/><path d="M433 93v10" stroke="#3c4e5e"/>
<path d="M449 85h9l-9 9z" fill="#fff" stroke="none"/><path d="M1487 85h-9l9 9z" fill="#fff" stroke="none"/>
<path d="M1903 94h10l-5 6z" fill="#c4ccd4" stroke="none"/>
<path d="M1902 195l5-4 5 4" stroke="#111" stroke-width="2"/><path d="M1901 817l6 5 6-5" stroke="#111" stroke-width="2"/><path d="M1903 839h9l-4.500 5z" fill="#333" stroke="none"/>
<path d="M1903 856h8M1907 868v68M1903 940h8M1907 936v8" stroke="#56626e"/><path d="M1914 867l-14 8.500 14 8.500z" fill="#76838f" stroke="#5e6a76"/>
<path d="M1906 120v52" stroke="#6e7c88"/><path d="M1916 166l-15 10 15 10z" fill="#7e8b98" stroke="#55626e"/>
<path d="M462 952l-4 5 4 5M1765 952l4 5-4 5" stroke="#111" stroke-width="2"/><path d="M1784 955h7l-3.500 4z" fill="#222" stroke="none"/>
<path d="M1801 956h6M1815 956h65M1885 956h8M1889 952v8" stroke="#56626e"/><path d="M1833 950l-8 15h16z" fill="#5e6e7e" stroke="none"/>
<path d="M470 876h7l-3.500 4zM470 881h7v3h-7z" fill="#7f93a6" stroke="none"/><path d="M1503 876h7l-3.500 4zM1503 881h7v3h-7z" fill="#7f93a6" stroke="none"/>
<circle cx="523" cy="884" r="5.500" stroke="#7a1010" stroke-width="3"/><path d="M519 894h19M529 890l4 4-4 4" stroke="#c9a9a0"/>
<circle cx="523" cy="910" r="5" fill="#8c1010" stroke="none"/><ellipse cx="529" cy="917" rx="8" ry="5" stroke="#c9a9a0"/>
<path d="M608 888h8l-4 5zM608 915h8l-4 5z" fill="#5a6a78" stroke="none"/>
<path d="M630 897h5l8 9h5" stroke="#9fb2c2" stroke-width="1.500"/><path d="M630 945h6l7-9h5" stroke="#9fb2c2" stroke-width="1.500"/>
<path d="M749 897v10M753 897v10M757 897l6 5-6 5z" stroke="#a4b6c5"/><path d="M749 934h6v10h-6zM759 934v10M763 934v10" stroke="#a4b6c5"/>
<path d="M783 883h10M788 878v10M783 900h10" stroke="#8da0b0" stroke-width="2"/>
<path d="M958 881v12" stroke="#5f7282" stroke-width="1.800"/><ellipse cx="955" cy="893" rx="4.500" ry="3.500" fill="#5f7282" stroke="none"/>
<path d="M974 878v24M971 880l3 3 3-3M971 900l3-3 3 3" stroke="#5f7282"/>
<circle cx="1103" cy="889" r="6" fill="#5f7282" stroke="none"/><path d="M1103 885v4h3" stroke="#0a0f14"/>
<path d="M785 925v16M799 925l-9 8 9 8M824 925l-8 8 8 8M836 925l-8 8 8 8M865 925l8 8-8 8M877 925l8 8-8 8M905 925l8 8-8 8M918 925v16" stroke-width="2.500"/>
<path d="M941 926h13q6 0 6 7t-6 7h-23l8-9" stroke-width="2.500"/>
<rect x="990" y="925" width="15" height="16" stroke-width="2.800"/>
<path d="M1041 925l8 8-8 8" stroke-width="3"/>
<circle cx="1091" cy="933" r="8" fill="#a01c28" stroke="none"/>
</svg>
</div></body></html>
